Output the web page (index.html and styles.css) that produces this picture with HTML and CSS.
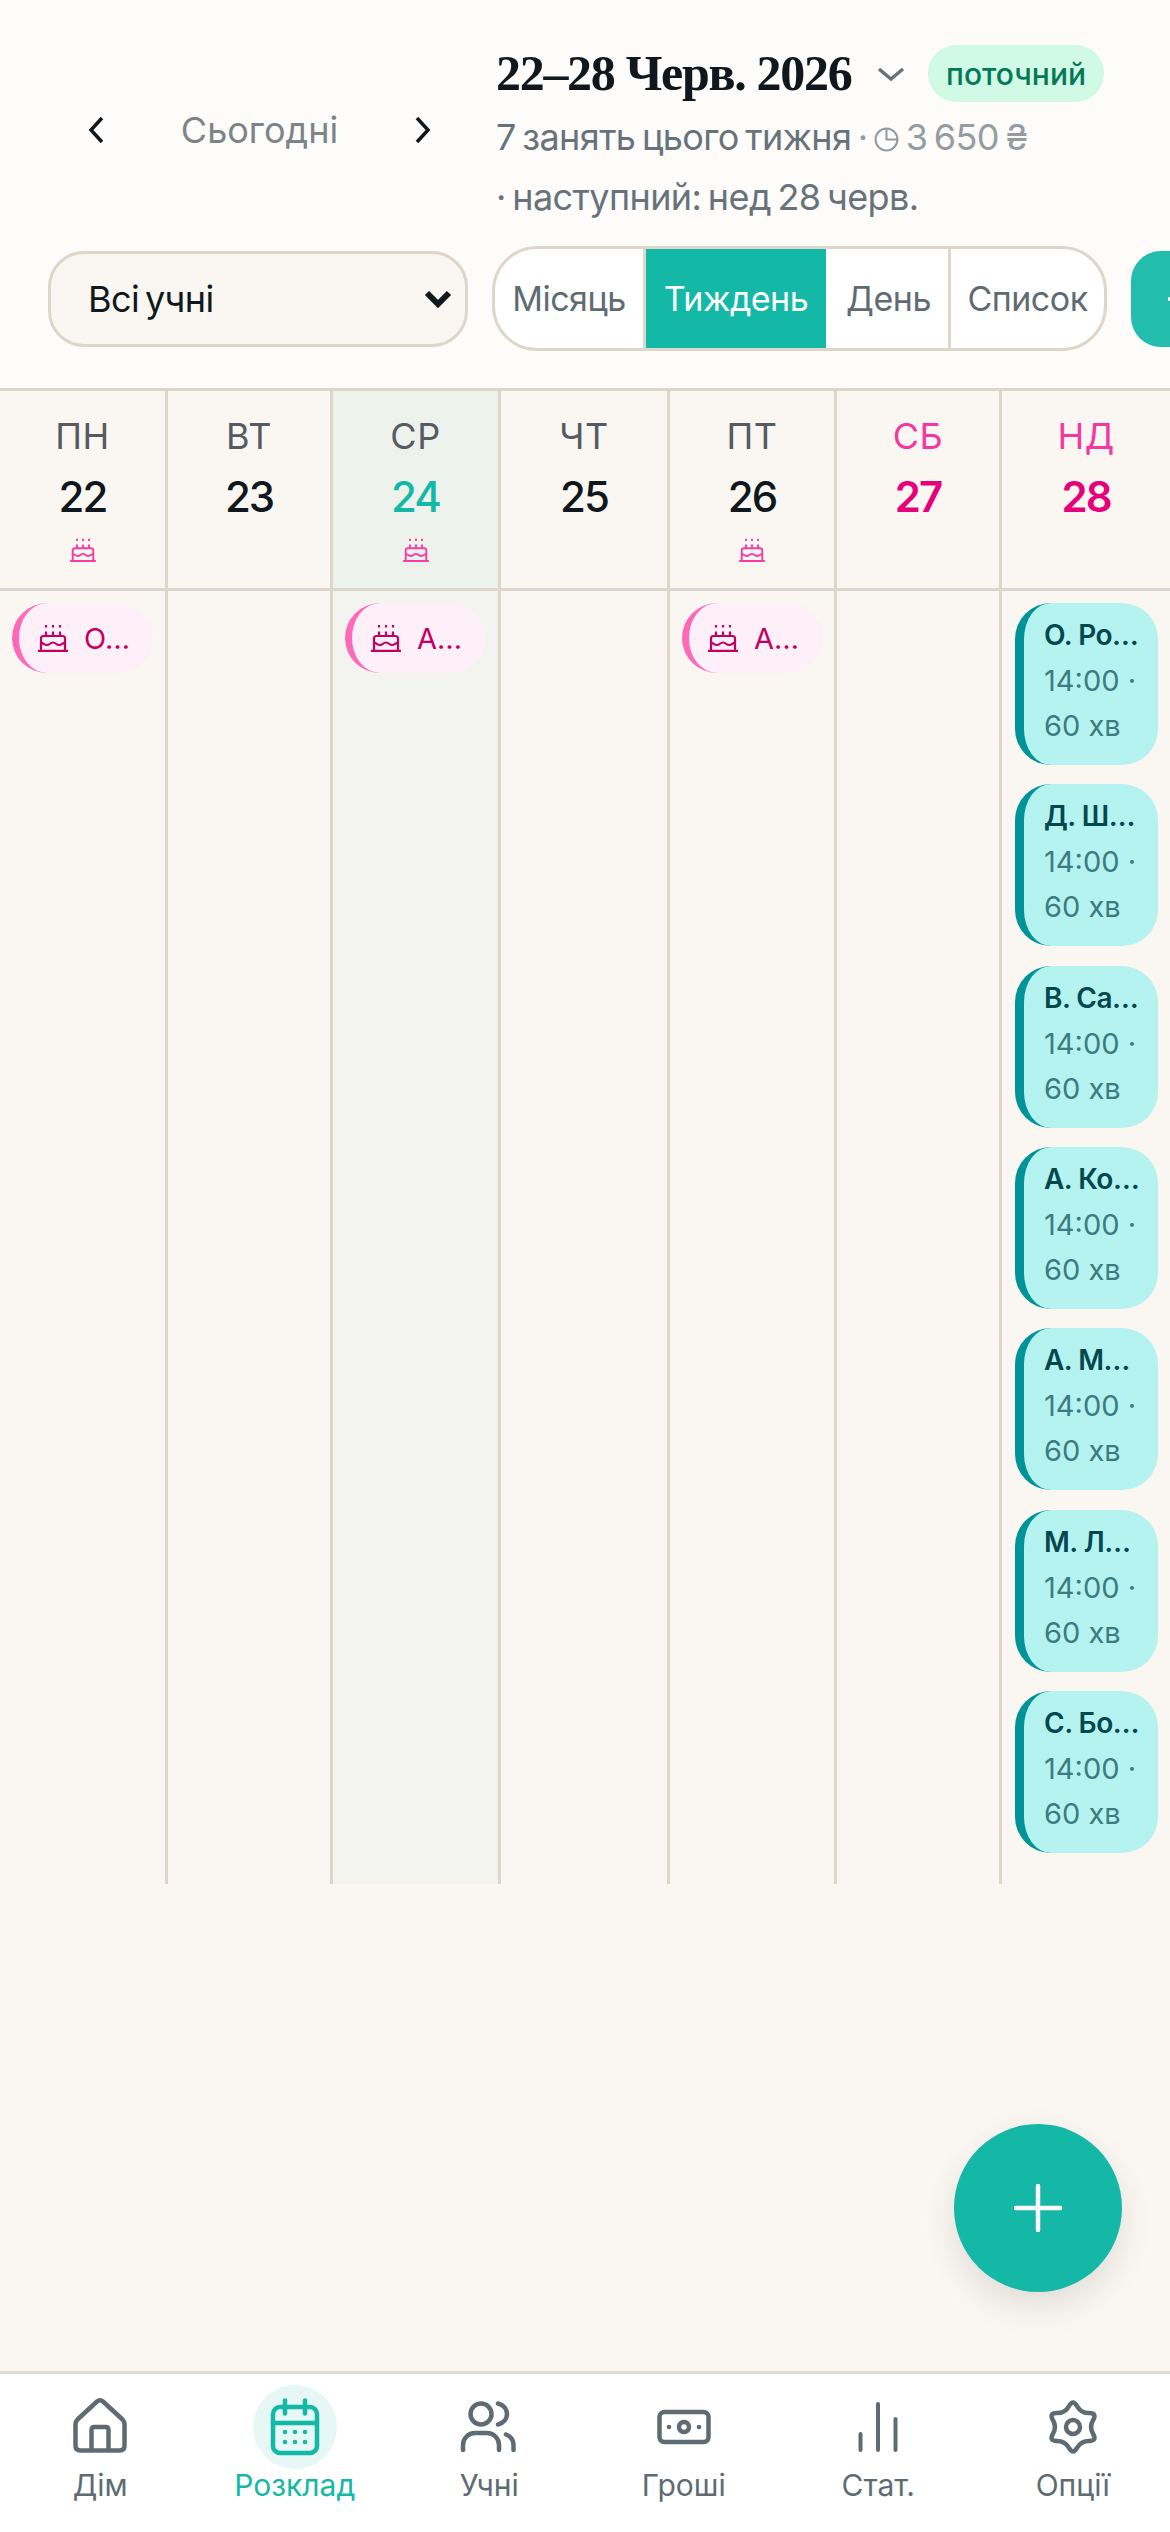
FILE: index.html
```html
<!DOCTYPE html>
<html lang="uk">
<head>
  <meta charset="UTF-8" />
  <meta name="viewport" content="width=device-width, initial-scale=1.0"/>
  <title>Розклад</title>
  <link rel="stylesheet" href="styles.css">
</head>
<body>
  <svg class="sprite" width="0" height="0">
    <symbol id="cake" viewBox="0 0 32 28">
      <path d="M1 26.8H31M4 26.8V14.5a2.5 2.5 0 0 1 2.5-2.5h19a2.5 2.5 0 0 1 2.5 2.5v12.3M4 18.5c2 0 3 2.5 6 2.5s3-2.5 6-2.5 3 2.5 6 2.5 4-2.5 6-2.5M9 12V7.5M16 12V7.5M23 12V7.5M9 1v2.4M16 1v2.4M23 1v2.4" fill="none" stroke="currentColor" stroke-width="2.2"/>
    </symbol>
  </svg>

  <header class="top">
    <div class="top-row">
      <div class="week-nav">
        <svg class="chev" viewBox="0 0 16 28"><path d="M14 2 3 14l11 12" /></svg>
        <span class="today-link">Сьогодні</span>
        <svg class="chev" viewBox="0 0 16 28"><path d="M2 2l11 12L2 26" /></svg>
      </div>
      <div class="week-info">
        <div class="title-row">
          <h1>22–28 Черв. 2026</h1>
          <svg class="title-chev" viewBox="0 0 28 14"><path d="M2 2l12 10L26 2" /></svg>
          <span class="badge">поточний</span>
        </div>
        <p class="meta">7 занять цього тижня <span class="meta-light">· <svg class="clock" viewBox="0 0 24 24"><circle cx="12" cy="12" r="10.5"/><path d="M12 1.5V12h10.5"/></svg> 3 650 ₴</span></p>
        <p class="meta">· наступний: нед 28 черв.</p>
      </div>
    </div>

    <div class="toolbar">
      <div class="student-select">
        <span>Всі учні</span>
        <svg viewBox="0 0 28 18"><path d="M3 3l11 11L25 3" /></svg>
      </div>
      <div class="segments">
        <span class="seg seg-month">Місяць</span>
        <span class="seg seg-week active">Тиждень</span>
        <span class="seg seg-day">День</span>
        <span class="seg seg-list">Список</span>
      </div>
      <div class="add-btn">
        <svg viewBox="0 0 30 30"><path d="M15 2v26M2 15h26" /></svg>
      </div>
    </div>
  </header>

  <main class="week">
    <section class="day">
      <div class="day-head">
        <div class="dow">ПН</div>
        <div class="num">22</div>
        <svg class="head-cake"><use href="#cake"/></svg>
      </div>
      <div class="day-body">
        <div class="bday"><svg><use href="#cake"/></svg><span>О…</span></div>
      </div>
    </section>

    <section class="day">
      <div class="day-head">
        <div class="dow">ВТ</div>
        <div class="num">23</div>
      </div>
      <div class="day-body"></div>
    </section>

    <section class="day today">
      <div class="day-head">
        <div class="dow">СР</div>
        <div class="num">24</div>
        <svg class="head-cake"><use href="#cake"/></svg>
      </div>
      <div class="day-body">
        <div class="bday"><svg><use href="#cake"/></svg><span>А…</span></div>
      </div>
    </section>

    <section class="day">
      <div class="day-head">
        <div class="dow">ЧТ</div>
        <div class="num">25</div>
      </div>
      <div class="day-body"></div>
    </section>

    <section class="day">
      <div class="day-head">
        <div class="dow">ПТ</div>
        <div class="num">26</div>
        <svg class="head-cake"><use href="#cake"/></svg>
      </div>
      <div class="day-body">
        <div class="bday"><svg><use href="#cake"/></svg><span>А…</span></div>
      </div>
    </section>

    <section class="day weekend">
      <div class="day-head">
        <div class="dow">СБ</div>
        <div class="num">27</div>
      </div>
      <div class="day-body"></div>
    </section>

    <section class="day weekend">
      <div class="day-head">
        <div class="dow">НД</div>
        <div class="num">28</div>
      </div>
      <div class="day-body lessons">
        <div class="lesson"><b>О. Ро…</b><span>14:00 ·</span><span>60 хв</span></div>
        <div class="lesson"><b>Д. Ш…</b><span>14:00 ·</span><span>60 хв</span></div>
        <div class="lesson"><b>В. Са…</b><span>14:00 ·</span><span>60 хв</span></div>
        <div class="lesson"><b>А. Ко…</b><span>14:00 ·</span><span>60 хв</span></div>
        <div class="lesson"><b>А. М…</b><span>14:00 ·</span><span>60 хв</span></div>
        <div class="lesson"><b>М. Л…</b><span>14:00 ·</span><span>60 хв</span></div>
        <div class="lesson"><b>С. Бо…</b><span>14:00 ·</span><span>60 хв</span></div>
      </div>
    </section>
  </main>

  <div class="fab">
    <svg viewBox="0 0 48 48"><path d="M24 2v44M2 24h44" /></svg>
  </div>

  <nav class="tabs">
    <div class="tab">
      <span class="tab-icon">
        <svg viewBox="0 0 60 60"><path d="M27 4.5 7.5 22.5Q5.5 24.5 5.5 27V48.5q0 5 5 5h39q5 0 5-5V27q0-2.500-2-4.500L33 4.500q-3-2.500-6 0zM21.500 53.500V33q0-3 3-3h11q3 0 3 3v20.500"/></svg>
      </span>
      <span>Дім</span>
    </div>
    <div class="tab active">
      <span class="tab-icon">
        <svg viewBox="0 0 60 60"><rect x="8" y="10" width="44" height="46" rx="7"/><path d="M8 26h44M20 3.500v13M40 3.500v13"/><g class="dots"><circle cx="20" cy="35" r="2.300"/><circle cx="30" cy="35" r="2.300"/><circle cx="40" cy="35" r="2.300"/><circle cx="20" cy="45" r="2.300"/><circle cx="30" cy="45" r="2.300"/><circle cx="40" cy="45" r="2.300"/></g></svg>
      </span>
      <span>Розклад</span>
    </div>
    <div class="tab">
      <span class="tab-icon">
        <svg viewBox="0 0 60 60"><circle cx="22" cy="17" r="10.500"/><path d="M39 6.500c6 1.500 9 6 9 10.500s-3 9-9 10.500M4 53v-5a12 12 0 0 1 12-12h12a12 12 0 0 1 12 12v5M47 37.500c5 2 7.500 5.500 7.500 10.500v5"/></svg>
      </span>
      <span>Учні</span>
    </div>
    <div class="tab">
      <span class="tab-icon">
        <svg viewBox="0 0 60 60"><rect x="5.500" y="15" width="49" height="30" rx="5"/><circle cx="30" cy="30" r="5"/><g class="dots"><circle cx="15" cy="30" r="2.300"/><circle cx="45" cy="30" r="2.300"/></g></svg>
      </span>
      <span>Гроші</span>
    </div>
    <div class="tab">
      <span class="tab-icon">
        <svg viewBox="0 0 60 60"><path class="bars" d="M12.500 37v16M30 7v46M47.500 22v31"/></svg>
      </span>
      <span>Стат.</span>
    </div>
    <div class="tab">
      <span class="tab-icon">
        <svg viewBox="0 0 60 60"><path d="M34 9.070Q38 16.140 46.130 16.070 54.250 16 50.130 23 46 30 50.130 37 54.250 44 46.130 43.930 38 43.860 34 50.930 30 58 26 50.930 22 43.860 13.880 43.930 5.750 44 9.880 37 14 30 9.880 23 5.750 16 13.880 16.070 22 16.140 26 9.070 30 2 34 9.070Z"/><circle cx="30" cy="30" r="7"/></svg>
      </span>
      <span>Опції</span>
    </div>
  </nav>
</body>
</html>
```

FILE: styles.css
```css
* {
  box-sizing: border-box;
}

body {
  margin: 0;
  width: 1170px;
  height: 2532px;
  display: flex;
  flex-direction: column;
  position: relative;
  overflow: hidden;
  font-family: Inter, "Noto Sans", sans-serif;
  background-color: #faf7f2;
  color: #10181d;
}

.sprite {
  position: absolute;
}

/* header */
.top {
  background-color: #fdfcfa;
  padding: 45px 0 37px 0;
}

.top-row {
  display: flex;
  align-items: center;
}

.week-nav {
  width: 343px;
  margin-left: 88px;
  margin-right: 65px;
  margin-bottom: 12px;
  display: flex;
  align-items: center;
  justify-content: space-between;
}

.chev {
  width: 16px;
  height: 28px;
  fill: none;
  stroke: #10181d;
  stroke-width: 3.5;
}

.today-link {
  font-size: 36px;
  color: #7c8488;
}

.title-row {
  display: flex;
  align-items: center;
  height: 57px;
}

h1 {
  margin: 0;
  font-family: "Liberation Serif", serif;
  font-size: 50px;
  font-weight: bold;
  letter-spacing: -1.3px;
  white-space: nowrap;
  line-height: 57px;
  width: 381px;
}

.title-chev {
  width: 28px;
  height: 14px;
  fill: none;
  stroke: #68727a;
  stroke-width: 3.5;
  margin-right: 23px;
}

.badge {
  width: 176px;
  height: 57px;
  border-radius: 29px;
  background-color: #d0fae5;
  color: #047857;
  font-size: 30px;
  font-weight: 500;
  display: flex;
  align-items: center;
  justify-content: center;
}

.meta {
  margin: 0;
  font-size: 36px;
  line-height: 60px;
  color: #68727a;
  letter-spacing: -0.6px;
  word-spacing: -3px;
  white-space: nowrap;
}

.meta:first-of-type {
  margin-top: 5px;
}

.meta-light {
  color: #959ca1;
}

.clock {
  width: 25px;
  height: 25px;
  vertical-align: -2px;
  fill: none;
  stroke: #959ca1;
  stroke-width: 2;
}

/* toolbar */
.toolbar {
  display: flex;
  align-items: center;
  gap: 24px;
  margin-top: 19px;
  padding-left: 48px;
  height: 105px;
  overflow: hidden;
}

.student-select {
  width: 420px;
  height: 96px;
  flex: none;
  border: 3px solid #ddd6cb;
  border-radius: 36px;
  background-color: #faf7f2;
  padding: 0 13px 0 37px;
  display: flex;
  align-items: center;
  justify-content: space-between;
  font-size: 36px;
  letter-spacing: -0.5px;
  word-spacing: -4px;
}

.student-select svg {
  width: 28px;
  height: 18px;
  fill: none;
  stroke: #10181d;
  stroke-width: 6;
}

.segments {
  width: 615px;
  height: 105px;
  flex: none;
  display: flex;
  border: 3px solid #ddd6cb;
  border-radius: 45px;
  background-color: #fff;
  overflow: hidden;
  font-size: 34px;
  color: #5f6b73;
}

.seg {
  display: flex;
  align-items: center;
  justify-content: center;
  border-right: 3px solid #ddd6cb;
  letter-spacing: -0.5px;
}

.seg-month { width: 151px; }
.seg-week { width: 183px; }
.seg-day { width: 122px; }
.seg-list { flex: 1; border-right: none; }

.seg.active {
  background-color: #14b8a6;
  color: #fff;
  border-right-color: #fff;
}

.add-btn {
  width: 120px;
  height: 96px;
  flex: none;
  border-radius: 30px;
  background-color: #22bdac;
  padding-left: 35px;
  display: flex;
  align-items: center;
}

.add-btn svg {
  width: 30px;
  height: 30px;
  fill: none;
  stroke: #fff;
  stroke-width: 3.5;
}

/* week grid */
.week {
  display: grid;
  grid-template-columns: 168px 165px 168px 169px 167px 165px 1fr;
  border-top: 3px solid #ddd6cb;
}

.day {
  display: flex;
  flex-direction: column;
  border-right: 3px solid #ddd6cb;
}

.day:last-child {
  border-right: none;
}

.day-head {
  height: 200px;
  padding-top: 25px;
  border-bottom: 3px solid #ddd6cb;
  text-align: center;
}

.dow {
  font-size: 36px;
  line-height: 40px;
  letter-spacing: 0.5px;
  color: #555b60;
}

.num {
  font-size: 42px;
  line-height: 50px;
  margin-top: 16px;
  font-weight: 500;
  letter-spacing: -2px;
}

.head-cake {
  display: block;
  width: 28px;
  height: 24px;
  margin: 16px auto 0;
  color: #f83ca0;
}

.today .day-head {
  background-color: #edf2ec;
}

.today .day-body {
  background-color: #f3f4ef;
}

.today .num {
  color: #14b8a6;
}

.weekend .dow {
  color: #f5389f;
}

.weekend .num {
  color: #e6007a;
  font-weight: 600;
}

.day-body {
  flex: 1;
  padding: 12px 10px 12px 12px;
}

.bday {
  width: 141px;
  height: 70px;
  border-left: 7px solid #ff69b8;
  border-radius: 36px;
  background-color: #fdf0f9;
  color: #c4005f;
  padding-left: 18px;
  display: flex;
  align-items: center;
  gap: 15px;
  font-size: 29px;
}

.bday svg {
  width: 32px;
  height: 28px;
  flex: none;
}

.lessons {
  padding: 12px 12px 31px 13px;
  display: flex;
  flex-direction: column;
  gap: 19.33px;
}

.lesson {
  height: 162px;
  border-left: 9px solid #00949a;
  border-radius: 36px;
  background-color: #b5f3f1;
  padding: 10px 0 0 20px;
  display: flex;
  flex-direction: column;
  font-size: 29px;
  line-height: 45px;
  color: #3b7c82;
  white-space: nowrap;
}

.lesson b {
  font-size: 28px;
  font-weight: 600;
  letter-spacing: -0.5px;
  color: #04484f;
}

/* floating button */
.fab {
  position: absolute;
  right: 48px;
  bottom: 240px;
  width: 168px;
  height: 168px;
  border-radius: 50%;
  background-color: #15b8a6;
  box-shadow: 0 14px 34px rgba(0, 0, 0, 0.1);
  display: flex;
  align-items: center;
  justify-content: center;
}

.fab svg {
  width: 48px;
  height: 48px;
  fill: none;
  stroke: #fff;
  stroke-width: 4.5;
  stroke-linecap: round;
}

/* bottom nav */
.tabs {
  margin-top: auto;
  height: 161px;
  border-top: 3px solid #e2dcd0;
  background-color: #fff;
  display: grid;
  grid-template-columns: repeat(6, 1fr);
  padding-left: 3px;
  color: #5f6b73;
  font-size: 30px;
  text-align: center;
}

.tab {
  display: flex;
  flex-direction: column;
  align-items: center;
  padding-top: 11px;
  line-height: 32px;
}

.tab-icon {
  width: 84px;
  height: 84px;
  border-radius: 50%;
  display: flex;
  align-items: center;
  justify-content: center;
}

.tab-icon svg {
  width: 60px;
  height: 60px;
  fill: none;
  stroke: currentColor;
  stroke-width: 4.5;
  stroke-linecap: round;
  stroke-linejoin: round;
}

.tab-icon .dots {
  fill: currentColor;
  stroke: none;
}

.tab-icon .bars {
  stroke-width: 4;
}

.tab.active {
  color: #14b8a6;
}

.tab.active .tab-icon {
  background-color: #e6f7f5;
}
```
